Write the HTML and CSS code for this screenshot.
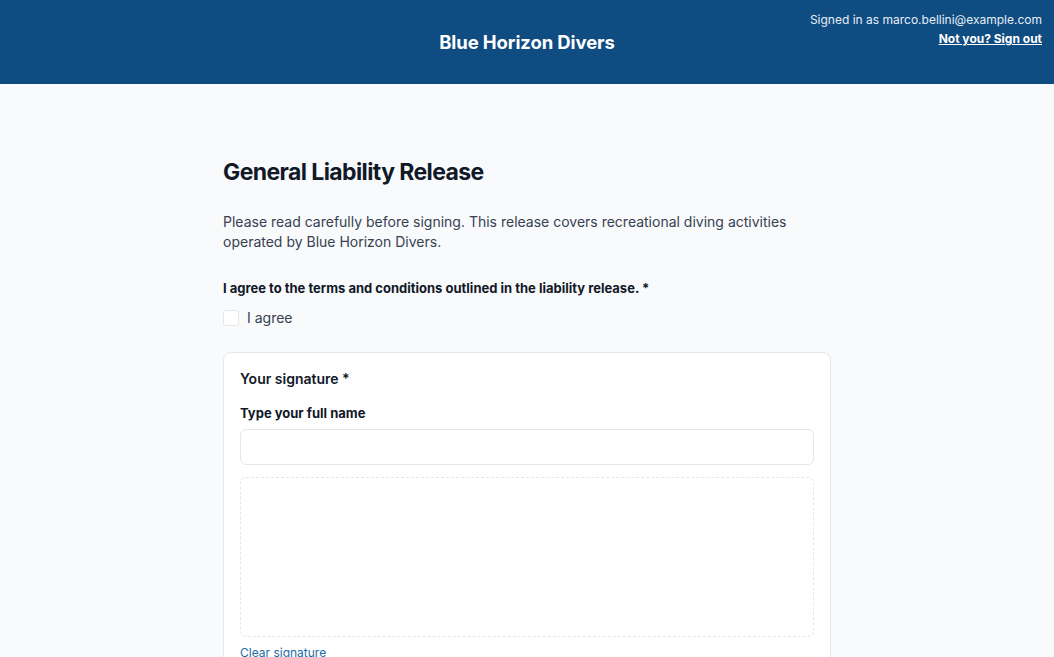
FILE: index.html
```html
<!DOCTYPE html>
<html lang="en">

<head>
    <meta charset="UTF-8">
    <meta name="viewport" content="width=device-width, initial-scale=1.0">
    <title>Blue Horizon Divers - Liability Release</title>
    <link rel="stylesheet" href="styles.css">
</head>

<body>
    <header class="top-bar">
        <h1 class="brand">Blue Horizon Divers</h1>
        <div class="account">
            <p class="signed-in">Signed in as marco.bellini@example.com</p>
            <a href="#" class="sign-out">Not you? Sign out</a>
        </div>
    </header>

    <main class="form-wrap">
        <h2 class="form-title">General Liability Release</h2>
        <p class="intro">Please read carefully before signing. This release covers recreational diving activities operated by Blue Horizon Divers.</p>

        <div class="field">
            <p class="field-label">I agree to the terms and conditions outlined in the liability release. *</p>
            <label class="check-row">
                <input type="checkbox" class="check">
                <span>I agree</span>
            </label>
        </div>

        <section class="sig-card">
            <h3 class="sig-title">Your signature *</h3>
            <label class="field-label" for="fullname">Type your full name</label>
            <input type="text" id="fullname" class="text-input">
            <div class="sig-pad"></div>
            <a href="#" class="clear-link">Clear signature</a>
        </section>
    </main>
</body>

</html>
```

FILE: styles.css
```css
body {
    margin: 0;
    font-family: "Inter", "Liberation Sans", sans-serif;
    background-color: #f8fafc;
    color: #111827;
}

.top-bar {
    position: relative;
    height: 84px;
    background-color: #0f4c81;
    display: flex;
    align-items: center;
    justify-content: center;
    color: #fff;
}

.brand {
    margin: 0;
    font-size: 18.5px;
    font-weight: 700;
    letter-spacing: -0.1px;
}

.account {
    position: absolute;
    top: 11px;
    right: 12px;
    text-align: right;
    font-size: 12px;
    line-height: 18px;
}

.signed-in {
    margin: 0 0 1px;
    color: #e6eef6;
}

.sign-out {
    color: #fff;
    font-weight: 700;
    text-decoration: underline;
}

.form-wrap {
    max-width: 608px;
    margin: 0 auto;
    padding-top: 72px;
}

.form-title {
    margin: 0;
    font-size: 23px;
    line-height: 32px;
    font-weight: 700;
    letter-spacing: -0.6px;
    color: #111827;
}

.intro {
    margin: 24px 0 0;
    font-size: 14px;
    line-height: 20px;
    color: #374151;
}

.field {
    margin-top: 27px;
}

.field-label {
    display: block;
    margin: 0;
    font-size: 13px;
    line-height: 18px;
    font-weight: 700;
    color: #111827;
}

.check-row {
    display: flex;
    align-items: center;
    gap: 8px;
    margin-top: 12px;
    font-size: 14px;
    color: #374151;
}

.check {
    appearance: none;
    margin: 0;
    width: 16px;
    height: 16px;
    border: 1px solid #e5e7eb;
    border-radius: 3px;
    background: #fff;
}

.sig-card {
    margin-top: 26px;
    padding: 16px 16px 0;
    background: #fff;
    border: 1px solid #e5e7eb;
    border-radius: 8px;
    height: 320px;
}

.sig-title {
    margin: 0 0 15px;
    font-size: 14px;
    line-height: 20px;
    font-weight: 600;
    color: #111827;
}

.text-input {
    display: block;
    box-sizing: border-box;
    width: 100%;
    height: 36px;
    margin-top: 7px;
    border: 1px solid #e5e7eb;
    border-radius: 6px;
    background: #fff;
}

.sig-pad {
    height: 158px;
    margin-top: 12px;
    border: 1px dashed #e5e7eb;
    border-radius: 6px;
    background: #fff;
}

.clear-link {
    display: inline-block;
    margin-top: 8px;
    font-size: 12px;
    color: #1d6ca3;
    text-decoration: none;
}
```
